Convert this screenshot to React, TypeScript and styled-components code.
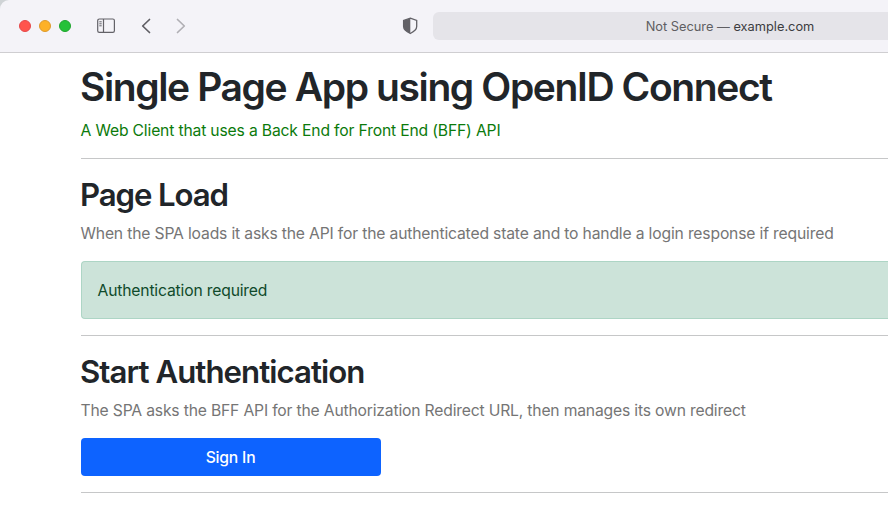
import React from "react";
import styled, { createGlobalStyle } from "styled-components";

const GlobalStyle = createGlobalStyle`
  * { box-sizing: border-box; }
  body { margin: 0; background: #fff; overflow: hidden; font-family: Inter, "Liberation Sans", sans-serif; }
`;

const Window = styled.div`
  width: 888px;
  height: 505px;
  overflow: hidden;
  background: #fff;
`;

const Chrome = styled.div`
  background: #cfd3d6;
`;

const Toolbar = styled.header`
  display: flex;
  align-items: center;
  height: 53px;
  padding-left: 19px;
  background: #f4f3f8;
  border-bottom: 1px solid #cfced1;
  border-top-left-radius: 9px;
`;

const Lights = styled.div`
  display: flex;
  gap: 8px;
`;

const Light = styled.span<{ $fill: string; $edge: string }>`
  width: 12px;
  height: 12px;
  border-radius: 50%;
  background: ${(p) => p.$fill};
  border: 1px solid ${(p) => p.$edge};
`;

const Icon = styled.svg<{ $gap: number }>`
  flex: none;
  display: block;
  margin-left: ${(p) => p.$gap}px;
`;

const AddressBar = styled.div`
  flex: none;
  width: 594px;
  height: 28px;
  margin-left: 15px;
  border-radius: 6px;
  background: #e5e4e9;
  text-align: center;
  line-height: 29px;
  font-size: 12.8px;
  color: #5f5e62;
  white-space: pre;
`;

const Fit = styled.span<{ $spacing: number }>`
  letter-spacing: ${(p) => p.$spacing}px;
`;

const Host = styled.span`
  color: #3c3c3f;
`;

const Page = styled.main`
  padding: 11px 0 0 81px;
  color: #212529;
  white-space: nowrap;
`;

const Title = styled.h1`
  margin: 0 0 0 -1px;
  height: 48px;
  line-height: 45px;
  font-size: 39px;
  font-weight: 580;
`;

const Subtitle = styled.p`
  margin: 6px 0 16px -0.5px;
  height: 24px;
  line-height: 26px;
  font-size: 15.7px;
  font-weight: 430;
  color: #0b7a0b;
`;

const Section = styled.section`
  border-top: 1px solid #c6c7c8;
  padding-top: 16px;
`;

const Heading = styled.h2`
  margin: 0 0 0 -1px;
  height: 38px;
  line-height: 41px;
  font-size: 31.2px;
  font-weight: 580;
`;

const Description = styled.p`
  margin: 8px 0 16px -0.5px;
  height: 24px;
  line-height: 26px;
  font-size: 15.7px;
  color: #757575;
`;

const Alert = styled.div`
  height: 58px;
  margin-bottom: 16px;
  padding: 16px 15.5px;
  border: 1px solid #add5c5;
  border-right: 0;
  border-radius: 4px 0 0 4px;
  background: #cce3d9;
  color: #0f4a2b;
  font-size: 15.7px;
  line-height: 26px;
`;

const Button = styled.button`
  display: block;
  width: 300px;
  height: 38px;
  margin: 0 0 16px;
  padding: 2px 1px 0 0;
  border: 0;
  border-radius: 4px;
  background: #0d63ff;
  color: #fff;
  font: 500 15.7px/24px Inter, sans-serif;
`;

export default function App() {
  return (
    <Window>
      <GlobalStyle />
      <Chrome>
        <Toolbar>
          <Lights>
            <Light $fill="#ff544d" $edge="#e5484a" />
            <Light $fill="#fdb127" $edge="#dd9a2c" />
            <Light $fill="#25c138" $edge="#1fa52e" />
          </Lights>
          <Icon $gap={25} width="20" height="16" viewBox="0 0 20 16" fill="none" stroke="#636268" strokeWidth="1.2">
            <rect x="1.7" y="1" width="16.7" height="13.4" rx="1.6" />
            <path d="M7.5 1v13.4" />
            <path d="M3.3 3.8h2.4M3.3 5.8h2.4M3.3 7.8h2.4" strokeWidth="1" />
          </Icon>
          <Icon $gap={25} width="10" height="16" viewBox="0 0 10 16" fill="none" stroke="#5f5e64" strokeWidth="1.7" strokeLinecap="round" strokeLinejoin="round">
            <path d="M8.5 1.5 1.7 8l6.8 6.5" />
          </Icon>
          <Icon $gap={25} width="10" height="16" viewBox="0 0 10 16" fill="none" stroke="#b0afb4" strokeWidth="1.7" strokeLinecap="round" strokeLinejoin="round">
            <path d="M1.5 1.5 8.3 8l-6.8 6.5" />
          </Icon>
          <Icon $gap={216} width="16" height="18" viewBox="0 0 16 18">
            <path d="M8.3 1.2 14.7 3.4v6.2c0 3-2 4.8-6.4 6.9C3.8 14.4 1.6 12.6 1.6 9.6V3.4Z" fill="none" stroke="#626167" strokeWidth="1.3" />
            <path d="M8.3 1.2v15.3C3.8 14.4 1.6 12.6 1.6 9.6V3.4Z" fill="#626167" />
          </Icon>
          <AddressBar>
            <Fit $spacing={0}>Not Secure — <Host>example.com</Host></Fit>
          </AddressBar>
        </Toolbar>
      </Chrome>
      <Page>
        <Title><Fit $spacing={-1.39}>Single Page App using OpenID Connect</Fit></Title>
        <Subtitle><Fit $spacing={-0.165}>A Web Client that uses a Back End for Front End (BFF) API</Fit></Subtitle>
        <Section>
          <Heading><Fit $spacing={-1.1}>Page Load</Fit></Heading>
          <Description><Fit $spacing={-0.17}>When the SPA loads it asks the API for the authenticated state and to handle a login response if required</Fit></Description>
          <Alert><Fit $spacing={-0.17}>Authentication required</Fit></Alert>
        </Section>
        <Section>
          <Heading><Fit $spacing={-0.95}>Start Authentication</Fit></Heading>
          <Description><Fit $spacing={-0.18}>The SPA asks the BFF API for the Authorization Redirect URL, then manages its own redirect</Fit></Description>
          <Button><Fit $spacing={-0.2}>Sign In</Fit></Button>
        </Section>
        <Section />
      </Page>
    </Window>
  );
}
